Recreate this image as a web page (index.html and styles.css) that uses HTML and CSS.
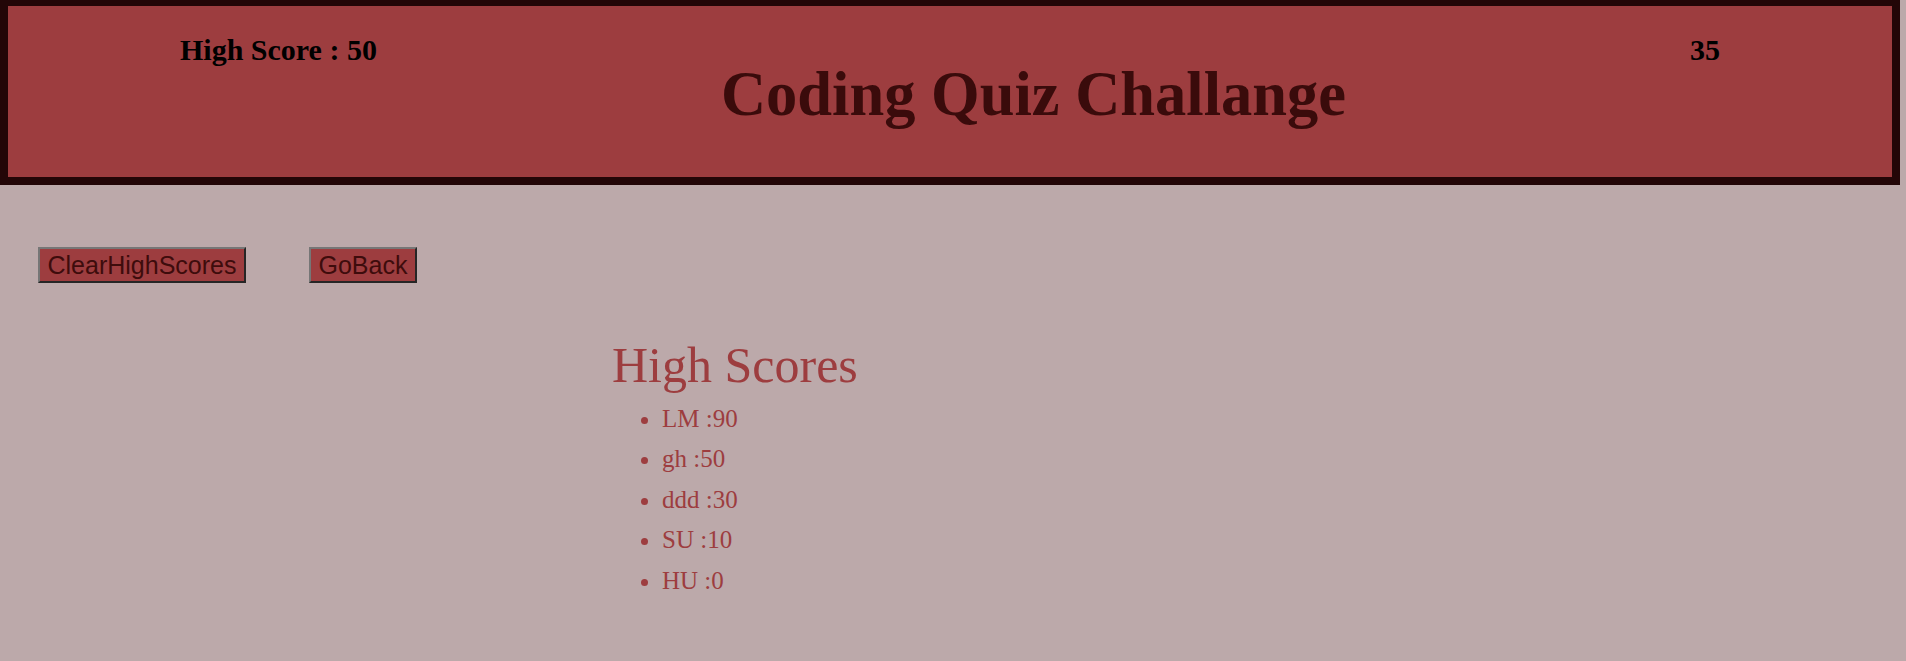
FILE: index.html
```html
<!DOCTYPE html>
<html>
<head>
<meta charset="utf-8">
<link rel="stylesheet" href="styles.css">
</head>
<body>
<header class="header">
  <h3 class="score">High Score : 50</h3>
  <h1 class="title">Coding Quiz Challange</h1>
  <h3 class="score">35</h3>
</header>
<div class="controls">
  <button class="btn">ClearHighScores</button>
  <button class="btn">GoBack</button>
</div>
<main class="scores">
  <h2 class="scores-title">High Scores</h2>
  <ul class="scores-list">
    <li>LM :90</li>
    <li>gh :50</li>
    <li>ddd :30</li>
    <li>SU :10</li>
    <li>HU :0</li>
  </ul>
</main>
</body>
</html>
```
FILE: styles.css
```css
body {
  margin: 0;
  background: #bca9aa;
  font-family: "Liberation Serif", "Times New Roman", serif;
}

.header {
  box-sizing: border-box;
  width: 1900px;
  height: 185px;
  display: flex;
  justify-content: space-around;
  align-items: flex-start;
  background: #9d3d3f;
  border: 8px solid #230607;
  border-top-width: 6px;
}

.score {
  margin: 27px 0 0;
  font-size: 30px;
  font-weight: bold;
  color: #000;
}

.title {
  margin: 52px 0 0;
  font-size: 62.5px;
  font-weight: bold;
  color: #3a0b0b;
}

.controls {
  display: flex;
  gap: 63px;
  padding: 62px 0 0 38px;
}

.btn {
  box-sizing: border-box;
  height: 36px;
  padding: 0 7.5px;
  font-family: "Liberation Sans", Arial, sans-serif;
  font-size: 25px;
  line-height: 30px;
  color: #3e0c0c;
  background: #9d3d3f;
  border: 2px solid;
  border-color: #767676 #262626 #262626 #767676;
}

.scores {
  padding: 53px 0 0 612px;
}

.scores-title {
  margin: 0;
  font-size: 50px;
  font-weight: normal;
  color: #9d3d3f;
}

.scores-list {
  margin: 5px 0 0;
  padding-left: 50px;
  font-size: 25px;
  line-height: 40.4px;
  color: #9d3d3f;
}
```
